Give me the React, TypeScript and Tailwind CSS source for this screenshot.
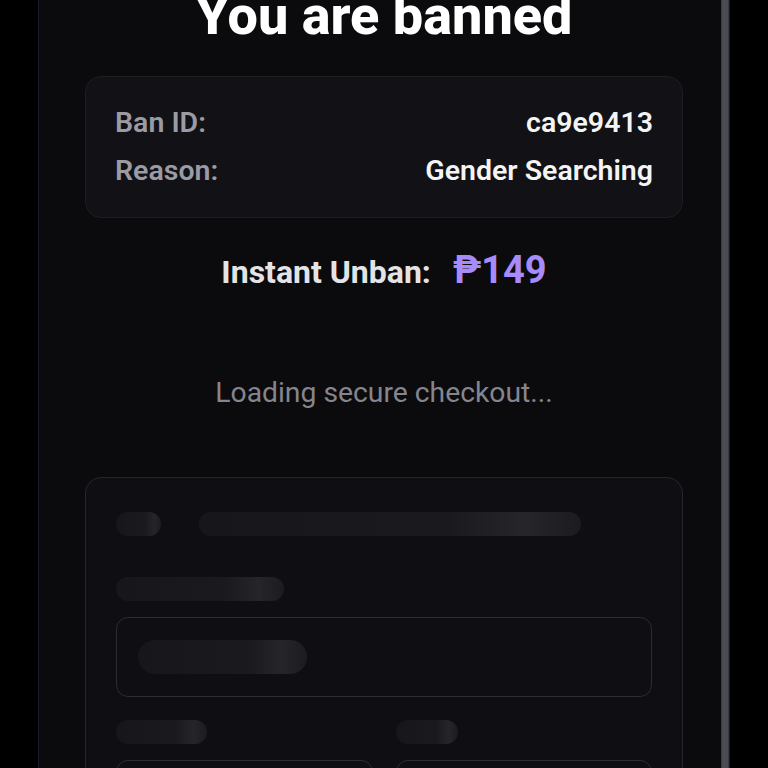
import React from "react";

function Bar({ className }: { className: string }) {
  return (
    <div
      className={`rounded-full bg-[linear-gradient(90deg,#17171b_0%,#1a1a1e_65%,#25252a_85%,#1c1c20_100%)] ${className}`}
    />
  );
}

export default function App() {
  return (
    <div className="h-[768px] w-[768px] overflow-hidden bg-black font-['Roboto',sans-serif]">
      <div className="ml-[38px] flex h-full w-[692px] border-x border-[#1a1a2b] bg-[#0b0b0e]">
        <div className="flex-1 pl-[46px] pr-[38px]">
          {/* Title */}
          <h1 className="-mt-[11px] text-center text-[54px] leading-none font-extrabold text-white">
            You are banned
          </h1>

          {/* Ban details */}
          <div className="mt-[33px] flex flex-col gap-4 rounded-2xl border border-[#1d1d24] bg-[#111116] px-[29px] py-[30px]">
            <div className="flex items-center justify-between text-[28.5px] leading-8 font-semibold">
              <span className="text-[#9b9ba5]">Ban ID:</span>
              <span className="text-[#f4f4f5]">ca9e9413</span>
            </div>
            <div className="flex items-center justify-between text-[28.5px] leading-8 font-semibold">
              <span className="text-[#9b9ba5]">Reason:</span>
              <span className="text-[#f4f4f5]">Gender Searching</span>
            </div>
          </div>

          {/* Price */}
          <div className="mt-8 flex h-10 items-baseline justify-center gap-[22px]">
            <span className="text-[32px] leading-10 font-bold text-[#e4e4e7]">Instant Unban:</span>
            <span className="text-[38px] leading-10 font-bold text-[#a78bfa]">₱149</span>
          </div>

          {/* Loading */}
          <p className="mt-[87px] text-center text-[28.3px] leading-8 text-[#85858d]">Loading secure checkout...</p>

          {/* Checkout skeleton */}
          <div className="mt-[68px] rounded-2xl border border-[#26262c] bg-[#0f0f13] px-[30px] pt-[34px] pb-8">
            <div className="flex items-center gap-[38px]">
              <Bar className="h-6 w-[45px]" />
              <Bar className="h-6 w-[382px]" />
            </div>

            <Bar className="mt-[41px] h-6 w-[168px]" />

            <div className="mt-4 flex h-20 items-center rounded-xl border border-[#2c2c32] pl-[21px]">
              <Bar className="h-[34px] w-[169px]" />
            </div>

            <div className="mt-[23px] grid grid-cols-2 gap-[23px]">
              <div>
                <Bar className="h-6 w-[91px]" />
                <div className="mt-4 h-20 rounded-xl border border-[#2c2c32]" />
              </div>
              <div>
                <Bar className="h-6 w-[62px]" />
                <div className="mt-4 h-20 rounded-xl border border-[#2c2c32]" />
              </div>
            </div>
          </div>
        </div>

        {/* Scrollbar */}
        <div className="w-2 border-x border-[#3a3a42] bg-[#4b4b53]" />
      </div>
    </div>
  );
}
